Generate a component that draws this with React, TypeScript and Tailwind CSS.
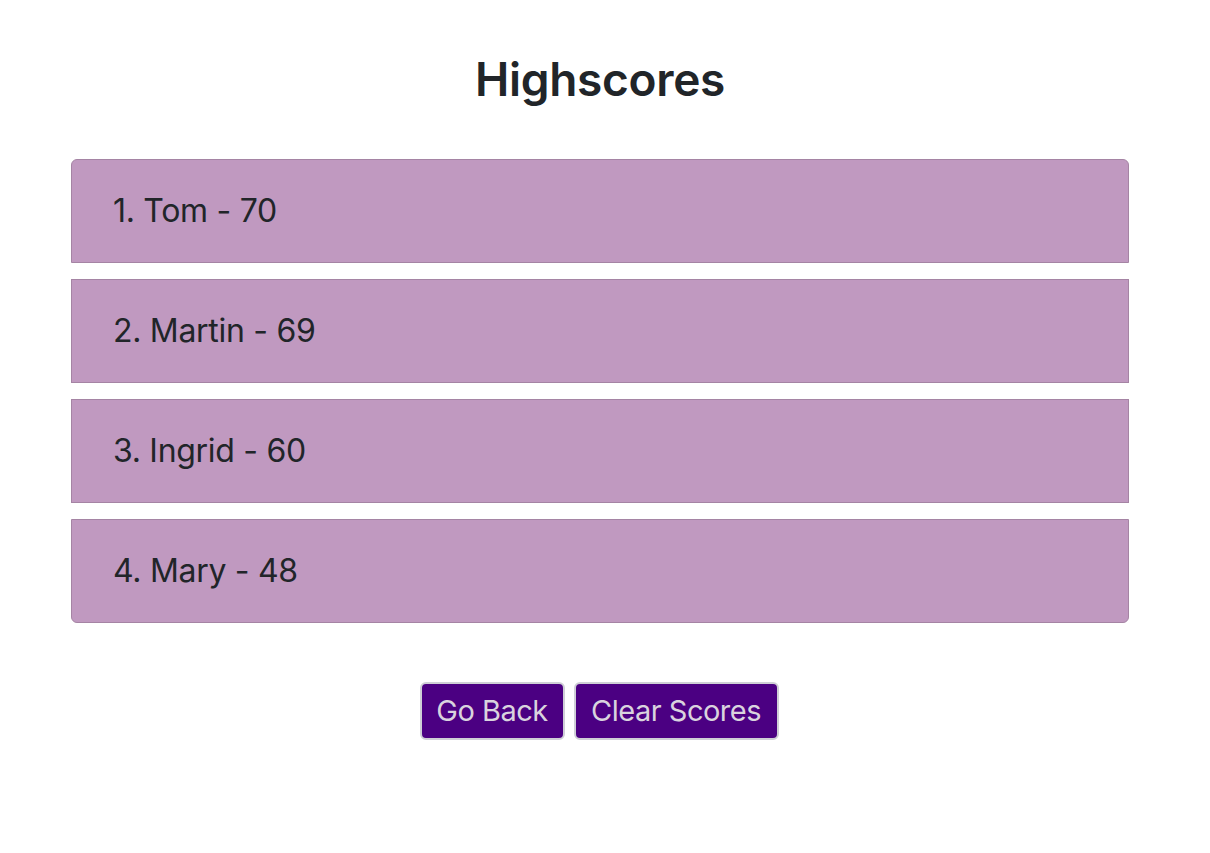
import React from "react";

const scores = ["1. Tom - 70", "2. Martin - 69", "3. Ingrid - 60", "4. Mary - 48"];

export default function App() {
  return (
    <div
      className="min-h-[853px] bg-white text-[#212529]"
      style={{ fontFamily: "Inter, 'Noto Sans', sans-serif" }}
    >
      <div className="ml-[71px] w-[1058px] pt-[50px]">
        <h1 className="text-center text-[46px] font-semibold leading-[58px] tracking-[-0.3px]">Highscores</h1>
        <ul className="mt-[51px] flex flex-col gap-[16px]">
          {scores.map((s, i) => (
            <li
              key={s}
              className={
                "h-[104px] border border-[#a584a4] bg-[#c099c0] pl-[41px] flex items-center text-[32px] leading-none tracking-[-0.3px] " +
                (i === 0 ? "rounded-t-[6px] " : "") +
                (i === scores.length - 1 ? "rounded-b-[6px]" : "")
              }
            >
              <span>{s}</span>
            </li>
          ))}
        </ul>
        <div className="mt-[59px] flex justify-center gap-[9px] pr-[2px]">
          <button className="h-[58px] w-[145px] rounded-[6px] border-2 border-[#cfcfd6] bg-[#4b0082] text-[29px] tracking-[-0.5px] text-[#d9d3de]">
            Go Back
          </button>
          <button className="h-[58px] w-[205px] rounded-[6px] border-2 border-[#cfcfd6] bg-[#4b0082] text-[29px] tracking-[-0.5px] text-[#d9d3de]">
            Clear Scores
          </button>
        </div>
      </div>
    </div>
  );
}
